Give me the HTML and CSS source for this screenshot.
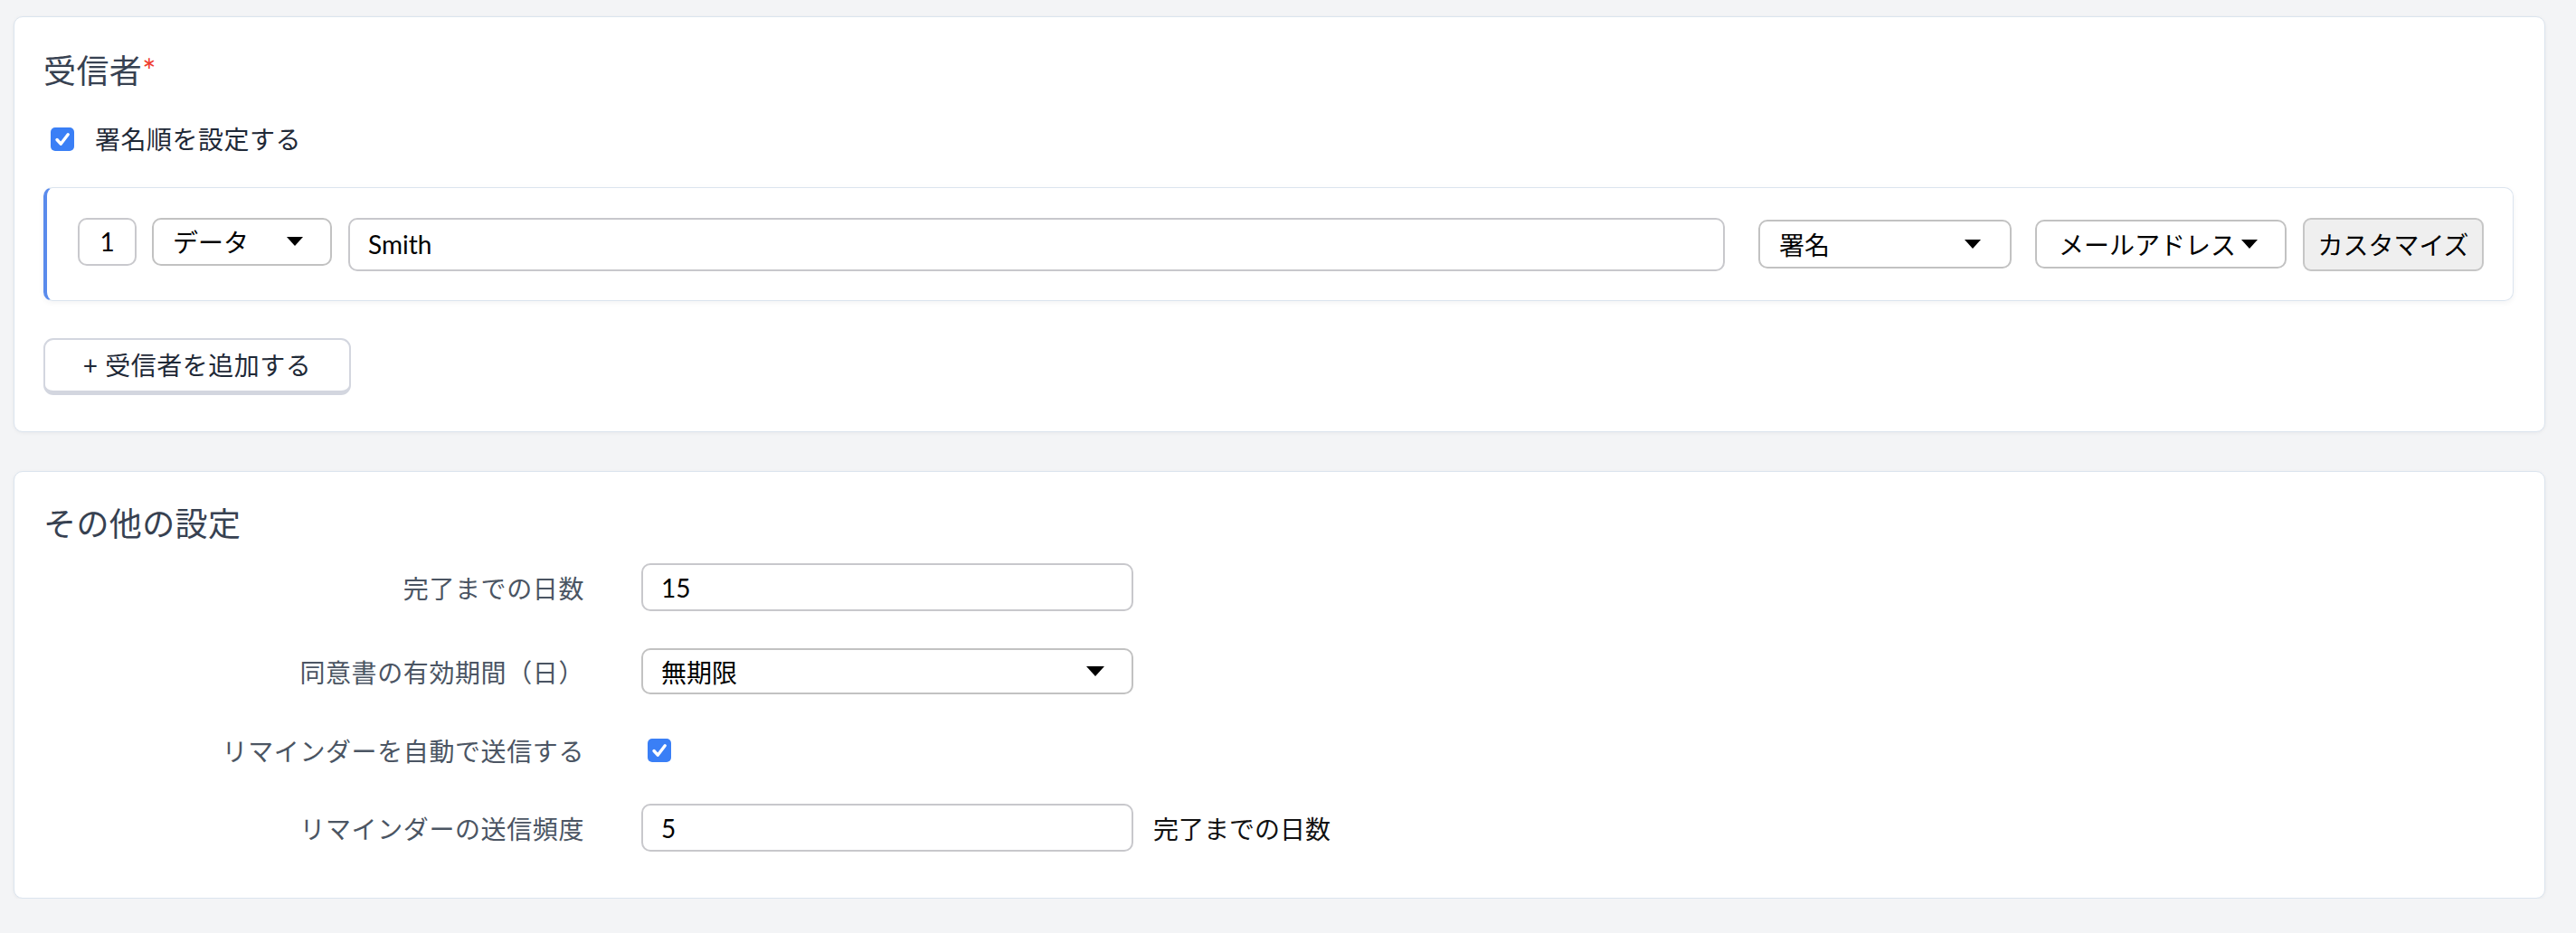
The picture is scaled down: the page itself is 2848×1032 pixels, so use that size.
FILE: index.html
```html
<!DOCTYPE html>
<html lang="ja">
<head>
<meta charset="utf-8">
<title>受信者</title>
<link rel="stylesheet" href="styles.css">
</head>
<body>
<div class="page">
  <section class="card card-recipients">
    <h2 class="card-title">受信者<span class="req">*</span></h2>
    <label class="check-row">
      <span class="checkbox"><svg width="26" height="26" viewBox="0 0 26 26"><rect x="0" y="0" width="26" height="26" rx="5" fill="#3a7ff6"/><path d="M7 13.5 L11.2 18.2 L19.2 7.8" fill="none" stroke="#fff" stroke-width="3.4" stroke-linecap="round" stroke-linejoin="round"/></svg></span>
      <span class="check-text">署名順を設定する</span>
    </label>
    <div class="recipient">
      <div class="order">1</div>
      <div class="select sel-type"><span>データ</span><svg class="caret" width="18" height="10" viewBox="0 0 18 10"><polygon points="0,0 18,0 9,10" fill="#000"/></svg></div>
      <div class="field field-name">Smith</div>
      <div class="select sel-role"><span>署名</span><svg class="caret" width="18" height="10" viewBox="0 0 18 10"><polygon points="0,0 18,0 9,10" fill="#000"/></svg></div>
      <div class="select sel-mail"><span>メールアドレス</span><svg class="caret" width="18" height="10" viewBox="0 0 18 10"><polygon points="0,0 18,0 9,10" fill="#000"/></svg></div>
      <button class="btn-custom" type="button">カスタマイズ</button>
    </div>
    <button class="btn-add" type="button">+ 受信者を追加する</button>
  </section>

  <section class="card card-settings">
    <h2 class="card-title">その他の設定</h2>
    <div class="form-rows">
      <div class="form-row">
        <div class="form-label">完了までの日数</div>
        <div class="field field-wide">15</div>
      </div>
      <div class="form-row form-row-expiry">
        <div class="form-label">同意書の有効期間（日）</div>
        <div class="select select-wide"><span>無期限</span><svg class="caret" width="20" height="11" viewBox="0 0 20 11"><polygon points="0,0 20,0 10,11" fill="#000"/></svg></div>
      </div>
      <div class="form-row form-row-remind">
        <div class="form-label">リマインダーを自動で送信する</div>
        <span class="checkbox checkbox-form"><svg width="26" height="26" viewBox="0 0 26 26"><rect x="0" y="0" width="26" height="26" rx="5" fill="#3a7ff6"/><path d="M7 13.5 L11.2 18.2 L19.2 7.8" fill="none" stroke="#fff" stroke-width="3.4" stroke-linecap="round" stroke-linejoin="round"/></svg></span>
      </div>
      <div class="form-row form-row-freq">
        <div class="form-label">リマインダーの送信頻度</div>
        <div class="field field-wide">5</div>
        <div class="suffix">完了までの日数</div>
      </div>
    </div>
  </section>
</div>
</body>
</html>
```

FILE: styles.css
```css
* {
  box-sizing: border-box;
}

html, body {
  margin: 0;
  padding: 0;
}

body {
  background: #f3f4f6;
  font-family: Lato, "Noto Sans CJK JP", sans-serif;
  color: #1f2937;
}

.page {
  padding: 18px 34px 0 15px;
  display: flex;
  flex-direction: column;
  gap: 43px;
}

.card {
  background: #ffffff;
  border: 1px solid #dbe4ee;
  border-radius: 10px;
  box-shadow: 0 1px 4px rgba(15, 23, 42, 0.05);
  padding: 37px 34px 40px 32px;
  display: flex;
  flex-direction: column;
  align-items: flex-start;
}

.card-title {
  margin: 0;
  font-size: 36px;
  line-height: 44px;
  font-weight: 400;
  color: #374151;
  letter-spacing: 0.4px;
}

.req {
  color: #ef3b2d;
}

.check-row {
  margin-top: 41px;
  margin-left: 8px;
  display: flex;
  align-items: center;
  gap: 23px;
  height: 26px;
}

.checkbox {
  display: block;
  width: 26px;
  height: 26px;
}

.checkbox svg {
  display: block;
}

.check-text {
  font-size: 28px;
  line-height: 26px;
  color: #1f2937;
  letter-spacing: 0.5px;
}

.recipient {
  margin-top: 40px;
  align-self: stretch;
  height: 126px;
  border: 1px solid #dbe4ee;
  border-left: 4px solid #5a8bec;
  border-radius: 10px;
  box-shadow: 0 2px 6px rgba(15, 23, 42, 0.05);
  padding: 0 32px 0 34px;
  display: flex;
  align-items: center;
}

.order {
  width: 65px;
  height: 53px;
  border: 2px solid #c9c9cd;
  border-radius: 10px;
  font-size: 28px;
  display: flex;
  align-items: center;
  justify-content: center;
  color: #000;
  margin-bottom: 6px;
}

.select {
  height: 54px;
  border: 2px solid #c2c2c2;
  border-radius: 10px;
  background: #fff;
  display: flex;
  align-items: center;
  justify-content: space-between;
  padding: 0 30px 0 21px;
  font-size: 28px;
  color: #000;
  white-space: nowrap;
}

.caret {
  display: block;
  flex: none;
}

.sel-type {
  width: 199px;
  height: 53px;
  margin-left: 17px;
  margin-bottom: 6px;
}

.field {
  height: 59px;
  border: 2px solid #c8c8cc;
  border-radius: 10px;
  background: #fff;
  display: flex;
  align-items: center;
  padding: 0 20px;
  font-size: 28px;
  color: #000;
}

.field-name {
  flex: 1;
  margin-left: 18px;
}

.sel-role {
  width: 280px;
  margin-left: 37px;
  padding-right: 32px;
}

.sel-mail {
  width: 278px;
  margin-left: 26px;
  justify-content: flex-start;
  gap: 6px;
  padding: 0 0 0 24px;
}

.btn-custom {
  width: 200px;
  height: 59px;
  margin-left: 18px;
  background: #efefef;
  border: 2px solid #c6c6c6;
  border-radius: 9px;
  font-family: Lato, "Noto Sans CJK JP", sans-serif;
  font-size: 28px;
  color: #000;
  padding: 0;
}

.btn-add {
  margin-top: 41px;
  width: 340px;
  height: 63px;
  background: #fff;
  border: 2px solid #d3d6df;
  border-bottom-width: 5px;
  border-radius: 11px;
  font-family: Lato, "Noto Sans CJK JP", sans-serif;
  font-size: 28px;
  letter-spacing: 0.5px;
  color: #1f2937;
  padding: 0 0 2px 0;
}

.card-settings {
  padding-top: 35px;
  padding-bottom: 51px;
}

.form-rows {
  margin-top: 22px;
  display: flex;
  flex-direction: column;
  gap: 36px;
}

.form-row {
  height: 53px;
  display: flex;
  align-items: center;
}

.form-row-expiry {
  margin-top: 4px;
}

.form-row-remind {
  margin-top: -2px;
}

.form-row-freq {
  margin-top: -3px;
}

.form-label {
  width: 598px;
  margin-right: 63px;
  text-align: right;
  font-size: 28px;
  letter-spacing: 0.6px;
  color: #4b5563;
  white-space: nowrap;
}

.field-wide {
  width: 544px;
  height: 53px;
  padding: 0 20px;
}

.select-wide {
  width: 544px;
  height: 51px;
  padding: 0 30px 0 20px;
}

.checkbox-form {
  margin-left: 7px;
}

.suffix {
  margin-left: 22px;
  font-size: 28px;
  color: #111;
}
```
